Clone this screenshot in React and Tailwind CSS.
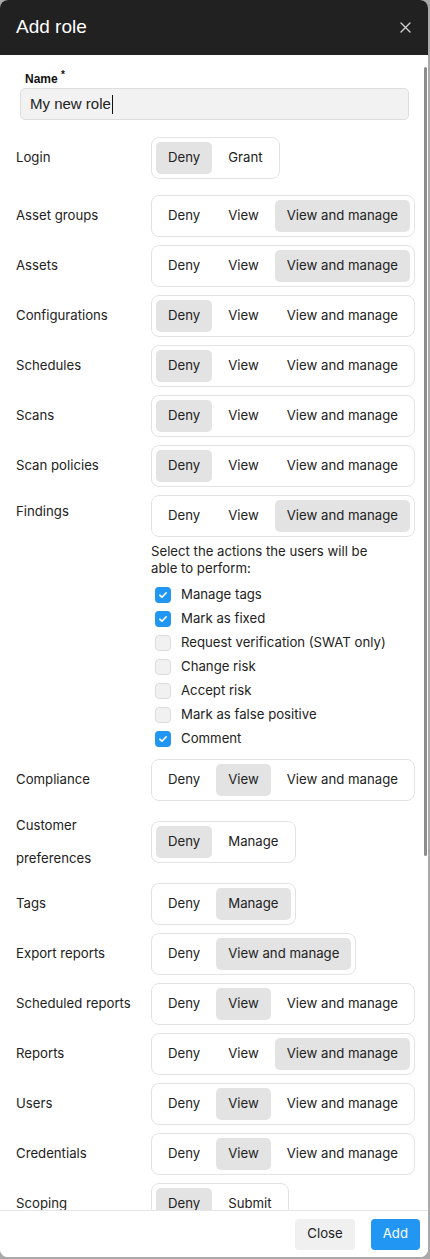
import React, { useState } from 'react';

const THREE = ['Deny', 'View', 'View and manage'];

const permisos = [
  { label: 'Asset groups', options: THREE, value: 'View and manage' },
  { label: 'Assets', options: THREE, value: 'View and manage' },
  { label: 'Configurations', options: THREE, value: 'Deny' },
  { label: 'Schedules', options: THREE, value: 'Deny' },
  { label: 'Scans', options: THREE, value: 'Deny' },
  { label: 'Scan policies', options: THREE, value: 'Deny' },
];

const despues = [
  { label: 'Compliance', options: THREE, value: 'View' },
  { label: 'Customer preferences', options: ['Deny', 'Manage'], value: 'Deny', tall: true },
  { label: 'Tags', options: ['Deny', 'Manage'], value: 'Manage' },
  { label: 'Export reports', options: ['Deny', 'View and manage'], value: 'View and manage' },
  { label: 'Scheduled reports', options: THREE, value: 'View' },
  { label: 'Reports', options: THREE, value: 'View and manage' },
  { label: 'Users', options: THREE, value: 'View' },
  { label: 'Credentials', options: THREE, value: 'View' },
  { label: 'Scoping', options: ['Deny', 'Submit'], value: 'Deny' },
];

const acciones = [
  { label: 'Manage tags', checked: true },
  { label: 'Mark as fixed', checked: true },
  { label: 'Request verification (SWAT only)', checked: false },
  { label: 'Change risk', checked: false },
  { label: 'Accept risk', checked: false },
  { label: 'Mark as false positive', checked: false },
  { label: 'Comment', checked: true },
];

const Segmented = ({ options, value }) => (
  <div className="flex gap-1 p-1 border border-[#e3e3e3] rounded-lg bg-white">
    {options.map((opt) => (
      <button
        key={opt}
        className={
          'h-8 px-3 rounded-[5px] text-[13.2px] text-[#222] whitespace-nowrap ' +
          (opt === value ? 'bg-[#e3e3e3]' : 'bg-transparent')
        }
      >
        {opt}
      </button>
    ))}
  </div>
);

const Row = ({ label, options, value, tall }) => (
  <div className="flex items-center">
    <div className={'w-[135px] shrink-0 text-[13.2px] text-[#222] ' + (tall ? 'leading-[33px] pr-4' : '')}>
      {label}
    </div>
    <Segmented options={options} value={value} />
  </div>
);

const Checkbox = ({ checked }) => (
  <span
    className={
      'w-4 h-4 rounded-[4px] flex items-center justify-center shrink-0 ' +
      (checked ? 'bg-[#2196f3]' : 'bg-[#f1f1f1] border border-[#dcdcdc]')
    }
  >
    {checked && (
      <svg width="10" height="10" viewBox="0 0 10 10" fill="none">
        <path d="M1.8 5.2 L4 7.2 L8.2 2.8" stroke="white" strokeWidth="1.6" strokeLinecap="round" strokeLinejoin="round" />
      </svg>
    )}
  </span>
);

const App = () => {
  const [nombre] = useState('My new role');

  return (
    <div className="w-[430px] h-[1259px] bg-[#a9a9a9] font-['Inter',sans-serif]">
      <div className="relative w-[428px] h-[1257px] bg-white rounded-lg overflow-hidden flex flex-col">
        {/* Cabecera */}
        <div className="h-[55px] shrink-0 bg-[#212121] flex items-center justify-between pl-4 pr-[17px]">
          <h1 className="text-[19px] text-white font-['Liberation_Sans',sans-serif]">Add role</h1>
          <svg width="11" height="11" viewBox="0 0 11 11" className="text-[#cfcfcf]">
            <path d="M1 1 L10 10 M10 1 L1 10" stroke="currentColor" strokeWidth="1.4" strokeLinecap="round" />
          </svg>
        </div>

        {/* Cuerpo */}
        <div className="flex-1 overflow-hidden pl-4 pr-[15px] pt-[16px]">
          <div className="px-1">
            <label className="block ml-[5px] text-[12px] font-bold text-[#111] leading-[16px] font-['Liberation_Sans',sans-serif]">
              Name <sup className="text-[10px]">*</sup>
            </label>
            <div className="mt-[1px] h-[32px] bg-[#f2f2f2] border border-[#dedede] rounded-[5px] flex items-center pl-[9px]">
              <span className="text-[15px] text-[#222] font-['Liberation_Sans',sans-serif]">{nombre}</span>
              <span className="w-px h-[19px] bg-[#111] ml-[1px]" />
            </div>
          </div>

          <div className="mt-[17px] flex flex-col gap-2">
            <div className="mb-2">
              <Row label="Login" options={['Deny', 'Grant']} value="Deny" />
            </div>
            {permisos.map((p) => (
              <Row key={p.label} {...p} />
            ))}

            {/* Findings */}
            <div className="flex items-start">
              <div className="w-[135px] shrink-0 text-[13.2px] text-[#222] leading-[33px]">Findings</div>
              <div>
                <Segmented options={THREE} value="View and manage" />
                <p className="mt-[6px] w-[240px] text-[13.2px] leading-[17px] text-[#222]">
                  Select the actions the users will be able to perform:
                </p>
                <div className="mt-[6px] flex flex-col">
                  {acciones.map((a) => (
                    <div key={a.label} className="h-6 flex items-center gap-[10px] pl-1">
                      <Checkbox checked={a.checked} />
                      <span className="text-[13.2px] text-[#222]">{a.label}</span>
                    </div>
                  ))}
                </div>
              </div>
            </div>

            {despues.map((p) => (
              <Row key={p.label} {...p} />
            ))}
          </div>
        </div>

        {/* Pie */}
        <div className="h-[47px] shrink-0 border-t border-[#e6e6e6] bg-white flex items-center justify-end gap-4 pr-2">
          <button className="h-[31px] px-[12px] rounded-[4px] bg-[#f0f0f0] text-[13.2px] text-[#222]">Close</button>
          <button className="h-[31px] px-[12px] rounded-[4px] bg-[#2196f3] text-[13.2px] text-white">Add</button>
        </div>

        {/* Barra de desplazamiento */}
        <div className="absolute top-[67px] left-[424px] w-[3px] h-[789px] bg-[#8c8c8c] rounded-full" />
      </div>
    </div>
  );
};

export default App;
